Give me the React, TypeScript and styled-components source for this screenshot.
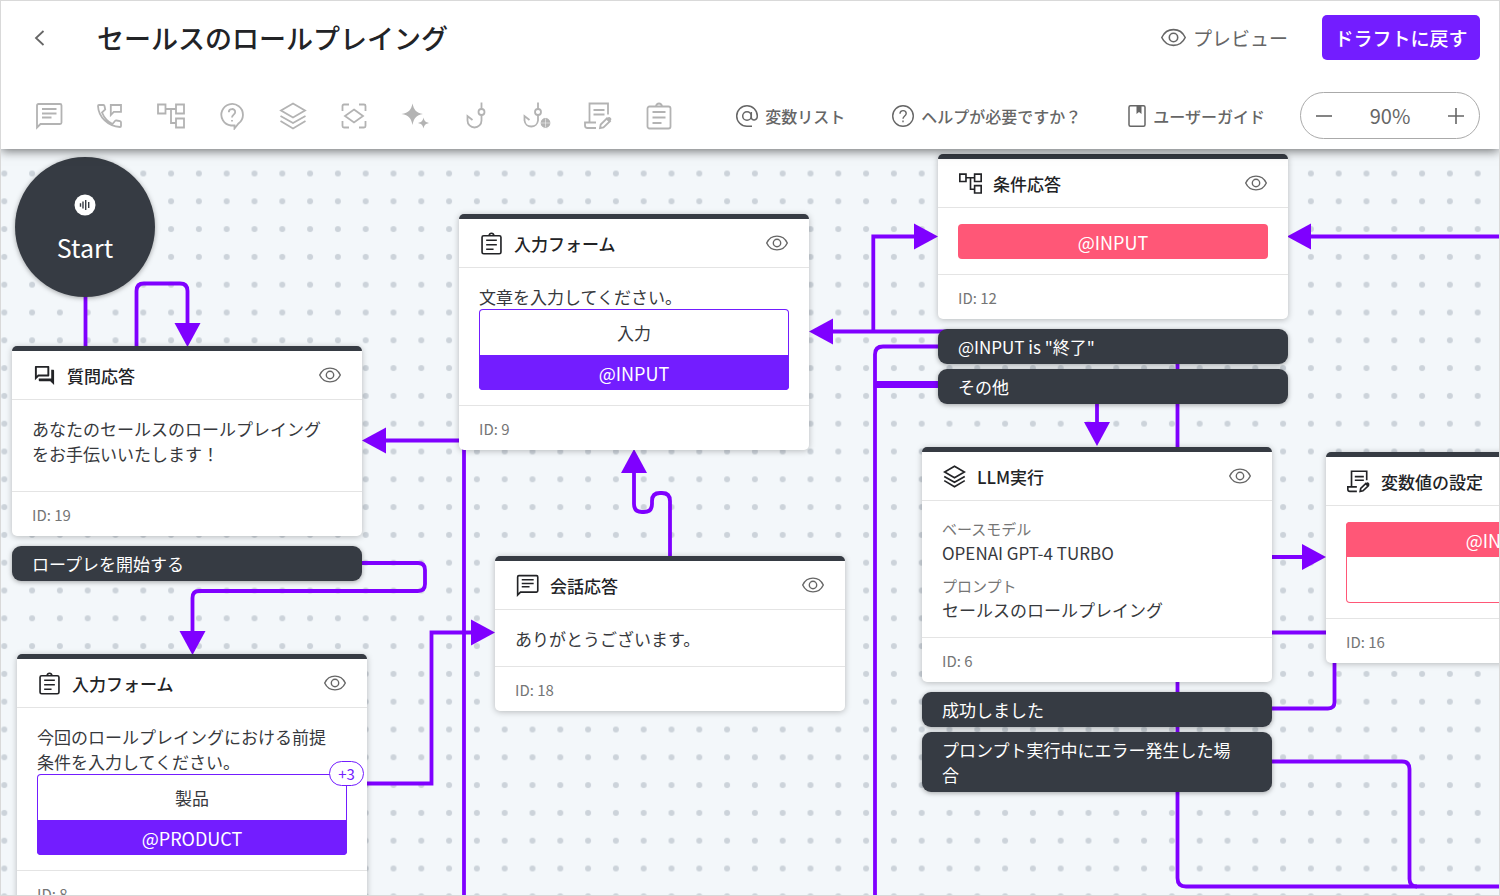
import React from "react";
import styled, { createGlobalStyle, css } from "styled-components";
import { MdOutlineForum } from "react-icons/md";

const color = {
  ink: "#222326",
  text: "#37393d",
  grey: "#666666",
  muted: "#757575",
  tool: "#b3b3b3",
  dark: "#363b43",
  purple: "#731dff",
  wire: "#7f00ff",
  pink: "#ff5777",
  line: "#e4e4e4",
  canvas: "#f3f7fa",
  dot: "#ccd3da",
};

const GlobalStyle = createGlobalStyle`
  *, *::before, *::after { box-sizing: border-box; }
  body {
    margin: 0;
    font-family: "Noto Sans CJK JP", "Noto Sans", sans-serif;
    color: ${color.text};
  }
  button {
    font: inherit;
    color: inherit;
    background: none;
    border: 0;
    padding: 0;
    cursor: pointer;
  }
  p, h1, h2, dl, dd { margin: 0; }
  svg { display: block; flex: none; }
`;

/* ---------- icons ---------- */

type IconName =
  | "chat" | "phone" | "tree" | "ask" | "layers" | "scan" | "sparkle"
  | "hook" | "hookGlobe" | "script" | "clipboard";

const glyphs: Record<IconName, React.ReactNode> = {
  chat: (
    <>
      <path d="M2 25.5V3.5Q2 2 3.5 2H25Q26.5 2 26.5 3.5V20.5Q26.5 22 25 22H5.5Z" />
      <path d="M7 7H21.5M7 11.5H21.5M7 15.5H16.500" />
    </>
  ),
  phone: (
    <>
      <path d="M2 4Q2 3 3 3H7.500Q8.300 3 8.500 4L9.200 7.500L6 10.500C8 15.500 11.500 19.500 16.500 22L19 19Q19.600 18.300 20.500 18.500L24 19.200Q25 19.500 25 20.500V24Q25 25 24 25C12 24.500 2.500 15 2 4Z" />
      <path d="M14.800 13V3H25V9.800H17.800Z" />
    </>
  ),
  tree: (
    <>
      <path d="M1 2.500H8.500V11.500H1ZM19 2.500H27V11.500H19ZM19 16.500H27V25.500H19Z" />
      <path d="M8.500 7H19M14 7V21H19" />
    </>
  ),
  ask: (
    <>
      <path d="M16.500 26.500L20.500 21.500A10.800 10.800 0 1 0 13 23.500H16.500V26.500Z" />
      <path d="M10.800 10.200C10.800 6 17.200 6 17.200 10C17.200 12.500 14 12.800 14 15.500M14 18V19.600" />
    </>
  ),
  layers: (
    <>
      <path d="M14 1.500L26 8.500L14 15.500L2 8.500Z" />
      <path d="M1.500 14L14 21L26.500 14M1.500 19L14 26.500L26.500 19" />
    </>
  ),
  scan: (
    <>
      <path d="M9 2.500H4Q2.500 2.500 2.500 4V9M19 2.500H24Q25.500 2.500 25.500 4V9M2.500 19V24Q2.500 25.500 4 25.500H9M25.500 19V24Q25.500 25.500 24 25.500H19" />
      <path d="M14 7.500L23 14L14 20.500L5 14Z" />
    </>
  ),
  sparkle: (
    <path
      fill="currentColor"
      stroke="none"
      d="M11.500 1.500C13 8 15 10.500 22 12C15 13.500 13 16 11.500 23C10 16 8 13.500 0.500 12C8 10.500 10 8 11.500 1.500ZM22.500 15.500C23.400 19 24.200 20 28 21C24.200 22 23.400 23 22.500 26.500C21.600 23 20.800 22 17 21C20.800 20 21.600 19 22.500 15.500Z"
    />
  ),
  hook: (
    <>
      <path d="M19.500 0.500V7M19.500 13V18.500A7 7 0 0 1 5.500 18.500V14L10.500 18" />
      <circle cx="19.500" cy="10" r="3" />
    </>
  ),
  hookGlobe: (
    <>
      <path d="M15 0.500V7M15 13V18.500A6.800 6.800 0 0 1 1.500 18.500V14L6.500 18" />
      <circle cx="15" cy="10" r="3" />
      <circle cx="22.500" cy="21" r="5.500" fill="currentColor" stroke="#fff" strokeWidth="1.200" />
      <path d="M18 21H27M22.500 16.500V25.500" stroke="#fff" strokeWidth="0.500" />
    </>
  ),
  script: (
    <>
      <path d="M5.500 20.500V1.500H24V12.500M9.500 8H20.500M9.500 12.500H20.500M12 20.500H1V23.500Q1 26 3.500 26H12" />
      <path d="M16 26L16.700 22.500L23 16.300L26 19.200L19.500 25.300Z" />
      <path d="M22 17.200L25 20.200L27 18.200Q28 17 26.800 16Q25.500 14.500 24.200 15.300Z" fill="currentColor" stroke="none" />
    </>
  ),
  clipboard: (
    <>
      <rect x="2.500" y="4.500" width="23" height="22" rx="2" />
      <path d="M7.500 10H20.500M7.500 15.500H20.500M7.500 21H16.500M11 4.500Q11.500 1.500 14 1.500Q16.500 1.500 17 4.500" />
    </>
  ),
};

const Icon = ({ name, size = 28, stroke = 1.8 }: { name: IconName; size?: number; stroke?: number }) => (
  <svg width={size} height={size} viewBox="0 0 28 28" fill="none" stroke="currentColor" strokeWidth={stroke} aria-hidden>
    {glyphs[name]}
  </svg>
);

const Eye = ({ size = 22 }: { size?: number }) => (
  <svg width={size} height={size} viewBox="0 0 22 22" fill="none" stroke="currentColor" strokeWidth="1.4" aria-hidden>
    <path d="M0.700 11C5 1.800 17 1.800 21.300 11C17 20.200 5 20.200 0.700 11Z" />
    <circle cx="11" cy="11" r="3.700" />
  </svg>
);

const Chevron = () => (
  <svg width="12" height="18" viewBox="0 0 12 18" fill="none" stroke="currentColor" strokeWidth="1.8" aria-hidden>
    <path d="M9.500 2L2 9L9.500 16" />
  </svg>
);

const At = () => (
  <svg width="24" height="24" viewBox="0 0 24 24" fill="none" stroke="currentColor" strokeWidth="1.5" aria-hidden>
    <circle cx="12" cy="12" r="4.300" />
    <path d="M16.300 8V13.200C16.300 17 22.300 17 22.300 12A10.300 10.300 0 1 0 12 22.300H17" />
  </svg>
);

const Help = () => (
  <svg width="24" height="24" viewBox="0 0 24 24" fill="none" stroke="currentColor" strokeWidth="1.400" aria-hidden>
    <circle cx="12" cy="12" r="10.300" />
    <path d="M9 9.700C9 5.500 15.200 5.800 15.200 9.500C15.200 12 12 12 12 14.800M12 16.500V18.200" />
  </svg>
);

const Guide = () => (
  <svg width="20" height="24" viewBox="0 0 20 24" fill="none" stroke="currentColor" strokeWidth="1.500" aria-hidden>
    <rect x="2" y="1.700" width="16" height="20.600" rx="1.500" />
    <path d="M9.500 2H14.500V10L12 8L9.500 10Z" fill="currentColor" stroke="none" />
  </svg>
);

const Sign = ({ plus }: { plus?: boolean }) => (
  <svg width="18" height="18" viewBox="0 0 18 18" stroke="currentColor" strokeWidth="1.600" aria-hidden>
    <path d={plus ? "M1 9H17M9 1V17" : "M1 9H17"} />
  </svg>
);

const Voice = () => (
  <svg width="22" height="22" viewBox="0 0 22 22" aria-hidden>
    <circle cx="11" cy="11" r="10.500" fill="#fff" />
    <path d="M6.500 9.200V12.800M9 7.500V14.500M11.700 6V16M14.700 8V14" stroke={color.dark} strokeWidth="1.400" />
  </svg>
);

/* ---------- page frame and header ---------- */

const Page = styled.div`
  display: flex;
  flex-direction: column;
  height: 100vh;
  border: 1px solid #d9d9d9;
  overflow: hidden;
`;

const Header = styled.header`
  position: relative;
  z-index: 2;
  flex: none;
  background: #fff;
  box-shadow: 0 2px 10px rgba(0, 0, 0, 0.55);
`;

const TitleRow = styled.div`
  display: flex;
  align-items: center;
  height: 73px;
  padding: 0 19px 0 33px;
`;

const BackButton = styled.button`
  display: flex;
  color: ${color.grey};
`;

const Title = styled.h1`
  flex: 1;
  margin-left: 51px;
  font-size: 27px;
  line-height: 40px;
  font-weight: 500;
  color: ${color.ink};
  white-space: nowrap;
`;

const PreviewButton = styled.button`
  display: flex;
  align-items: center;
  gap: 7px;
  margin-right: 34px;
  font-size: 19px;
  line-height: 28px;
  color: ${color.grey};
  white-space: nowrap;
`;

const DraftButton = styled.button`
  width: 158px;
  height: 45px;
  border-radius: 5px;
  background: ${color.purple};
  color: #fff;
  font-size: 19px;
  font-weight: 500;
  white-space: nowrap;
`;

const ToolRow = styled.div`
  display: flex;
  align-items: center;
  height: 75px;
  padding: 8px 19px 0 34px;
`;

const Tools = styled.div`
  display: flex;
  flex: 1;
  gap: 33px;
  color: ${color.tool};
`;

const ToolButton = styled.button`
  display: flex;
`;

const Links = styled.nav`
  display: flex;
  gap: 46px;
  margin-right: 35px;
`;

const HeaderLink = styled.a`
  display: flex;
  align-items: center;
  gap: 6px;
  font-size: 16px;
  line-height: 24px;
  font-weight: 500;
  color: ${color.grey};
  text-decoration: none;
  white-space: nowrap;
`;

const Zoom = styled.div`
  display: flex;
  align-items: center;
  justify-content: space-between;
  width: 180px;
  height: 47px;
  padding: 0 14px;
  border: 1px solid #aaaaaa;
  border-radius: 24px;
  color: ${color.grey};
  font-size: 20px;
`;

const ZoomButton = styled.button`
  display: flex;
`;

/* ---------- canvas ---------- */

const Canvas = styled.main`
  position: relative;
  flex: 1;
  overflow: hidden;
  background: ${color.canvas};
`;

const Wires = styled.svg`
  position: absolute;
  top: 0;
  left: 0;
  width: 100%;
  height: 100%;
`;

const Placed = styled.div<{ $x: number; $y: number }>`
  position: absolute;
  left: ${(p) => p.$x}px;
  top: ${(p) => p.$y}px;
`;

const StartNode = styled.div`
  display: flex;
  flex-direction: column;
  align-items: center;
  gap: 14px;
  width: 140px;
  height: 140px;
  padding-top: 37px;
  border-radius: 50%;
  background: ${color.dark};
  color: #fff;
  font-size: 25px;
  line-height: 34px;
  box-shadow: 0 1px 5px rgba(0, 0, 0, 0.35);
`;

const NodeStack = styled.div`
  display: flex;
  flex-direction: column;
  gap: 5px;
  width: 350px;
`;

const Card = styled.article`
  margin-bottom: 5px;
  border-top: 5px solid ${color.dark};
  border-radius: 5px;
  background: #fff;
  box-shadow: 0 1px 6px rgba(0, 0, 0, 0.25);
`;

const CardHeader = styled.header`
  display: flex;
  align-items: center;
  gap: 11px;
  height: 49px;
  padding: 0 21px;
  border-bottom: 1px solid ${color.line};
  color: ${color.ink};
`;

const CardTitle = styled.h2`
  flex: 1;
  font-size: 17px;
  line-height: 25px;
  font-weight: 500;
`;

const EyeButton = styled.button`
  display: flex;
  color: ${color.grey};
`;

const CardBody = styled.div`
  padding: 16px 20px 15px;
  font-size: 17px;
  line-height: 25px;
`;

const Message = styled.p<{ $spaced?: boolean }>`
  padding-right: 12px;
  margin-bottom: ${(p) => (p.$spaced ? 10 : 0)}px;
`;

const Facts = styled.dl`
  dt {
    font-size: 15px;
    line-height: 23px;
    color: ${color.muted};
  }
  dd + dt { margin-top: 9px; }
`;

const CardFooter = styled.footer`
  height: 45px;
  padding: 0 20px;
  border-top: 1px solid ${color.line};
  font-size: 15px;
  line-height: 46px;
  color: ${color.muted};
`;

const Field = styled.div<{ $tone: string }>`
  position: relative;
  display: flex;
  flex-direction: column;
  border-radius: 4px;
  text-align: center;
  box-shadow: inset 0 0 0 1px ${(p) => p.$tone};
`;

const FieldValue = styled.div`
  height: 46px;
  line-height: 48px;
`;

const Variable = styled.div<{ $tone: string; $at: "top" | "bottom" | "alone" }>`
  height: 35px;
  line-height: 36px;
  text-align: center;
  font-size: 18px;
  background: ${(p) => p.$tone};
  color: #fff;
  ${(p) => css`
    border-radius: ${p.$at === "alone" ? "4px" : p.$at === "top" ? "4px 4px 0 0" : "0 0 4px 4px"};
  `}
`;

const Badge = styled.span`
  position: absolute;
  top: -13px;
  right: -17px;
  width: 35px;
  height: 25px;
  border: 1px solid ${color.purple};
  border-radius: 13px;
  background: #fff;
  color: ${color.purple};
  font-size: 15px;
  line-height: 23px;
`;

const Branch = styled.div`
  padding: 5px 32px 5px 20px;
  border-radius: 9px;
  background: ${color.dark};
  color: #fff;
  font-size: 17px;
  line-height: 25px;
  box-shadow: 0 1px 5px rgba(0, 0, 0, 0.35);
`;

type NodeProps = {
  x: number;
  y: number;
  id: number;
  title: string;
  icon: React.ReactNode;
  branches?: string[];
  children: React.ReactNode;
};

const FlowNode = ({ x, y, id, title, icon, branches = [], children }: NodeProps) => (
  <Placed $x={x} $y={y}>
    <NodeStack>
      <Card>
        <CardHeader>
          {icon}
          <CardTitle>{title}</CardTitle>
          <EyeButton aria-label="プレビュー"><Eye /></EyeButton>
        </CardHeader>
        <CardBody>{children}</CardBody>
        <CardFooter>ID: {id}</CardFooter>
      </Card>
      {branches.map((b) => <Branch key={b}>{b}</Branch>)}
    </NodeStack>
  </Placed>
);

const wires = [
  "M84.500 146V200",
  "M135.500 200V142Q135.500 134.500 143 134.500H179Q186.500 134.500 186.500 142V176",
  "M460 291.500H384",
  "M463 290V760",
  "M360 414H417Q424 414 424 421V435Q424 442 417 442H198Q191.500 442 191.500 449V484",
  "M364 634.500H430.500V483.500H472",
  "M669 410V352Q669 344 661 344H659Q651 344 651 352V355Q651 363 643 363H641Q633 363 633 355V322",
  "M872.300 182V87.500H915",
  "M830 182.500H1168Q1176.500 182.500 1176.500 191V729Q1176.500 737.500 1185 737.500H2600",
  "M940 197.500H882Q874 197.500 874 205.500V760",
  "M1096 250V276",
  "M2600 87.500H1308",
  "M1268 408H1303",
  "M1268 483.500H1330",
  "M1268 559.500H1327Q1333.500 559.500 1333.500 553V500",
  "M1268 612.500H1401Q1408.500 612.500 1408.500 620V730Q1408.500 737.500 1416 737.500",
];

const arrows: [number, number, number][] = [
  [186.5, 198, 90],
  [361, 291.5, 180],
  [191.5, 506, 90],
  [494, 483.5, 0],
  [633, 300, 270],
  [937, 87.5, 0],
  [808, 182.5, 180],
  [1096, 297, 90],
  [1286, 87.5, 180],
  [1325, 408, 0],
];

const tools: [IconName, string][] = [
  ["chat", "会話応答"], ["phone", "音声応答"], ["tree", "条件応答"], ["ask", "質問応答"],
  ["layers", "LLM実行"], ["scan", "スキャン"], ["sparkle", "生成"], ["hook", "フック"],
  ["hookGlobe", "外部フック"], ["script", "変数値の設定"], ["clipboard", "入力フォーム"],
];

const nodeIcon = (name: IconName) => <Icon name={name} size={23} stroke={2} />;

export default function App() {
  return (
    <>
      <GlobalStyle />
      <Page>
        <Header>
          <TitleRow>
            <BackButton aria-label="戻る"><Chevron /></BackButton>
            <Title>セールスのロールプレイング</Title>
            <PreviewButton><Eye size={25} />プレビュー</PreviewButton>
            <DraftButton>ドラフトに戻す</DraftButton>
          </TitleRow>
          <ToolRow>
            <Tools>
              {tools.map(([name, label]) => (
                <ToolButton key={name} aria-label={label}><Icon name={name} /></ToolButton>
              ))}
            </Tools>
            <Links>
              <HeaderLink href="#variables"><At />変数リスト</HeaderLink>
              <HeaderLink href="#help"><Help />ヘルプが必要ですか？</HeaderLink>
              <HeaderLink href="#guide"><Guide />ユーザーガイド</HeaderLink>
            </Links>
            <Zoom>
              <ZoomButton aria-label="縮小"><Sign /></ZoomButton>
              <span>90%</span>
              <ZoomButton aria-label="拡大"><Sign plus /></ZoomButton>
            </Zoom>
          </ToolRow>
        </Header>

        <Canvas>
          <Wires aria-hidden>
            <defs>
              <pattern id="dots" x="-10.600" y="10.600" width="27.800" height="27.800" patternUnits="userSpaceOnUse">
                <circle cx="13.900" cy="13.900" r="3" fill={color.dot} />
              </pattern>
            </defs>
            <rect width="100%" height="100%" fill="url(#dots)" />
            <g fill="none" stroke={color.wire} strokeWidth="3.800">
              {wires.map((d) => <path key={d} d={d} />)}
              <path d="M940 235.500H874" strokeWidth="7" />
            </g>
            <g fill={color.wire}>
              {arrows.map(([x, y, turn]) => (
                <path key={`${x}-${y}`} d="M0 0L-24 -13V13Z" transform={`translate(${x} ${y}) rotate(${turn})`} />
              ))}
            </g>
          </Wires>

          <Placed $x={14} $y={8}>
            <StartNode><Voice />Start</StartNode>
          </Placed>

          <FlowNode x={11} y={197} id={19} title="質問応答" icon={<MdOutlineForum size={23} />} branches={["ロープレを開始する"]}>
            <Message $spaced>あなたのセールスのロールプレイングをお手伝いいたします！</Message>
          </FlowNode>

          <FlowNode x={16} y={505} id={8} title="入力フォーム" icon={nodeIcon("clipboard")}>
            <Message>今回のロールプレイングにおける前提条件を入力してください。</Message>
            <Field $tone={color.purple}>
              <FieldValue>製品</FieldValue>
              <Variable $tone={color.purple} $at="bottom">@PRODUCT</Variable>
              <Badge>+3</Badge>
            </Field>
          </FlowNode>

          <FlowNode x={458} y={65} id={9} title="入力フォーム" icon={nodeIcon("clipboard")}>
            <Message>文章を入力してください。</Message>
            <Field $tone={color.purple}>
              <FieldValue>入力</FieldValue>
              <Variable $tone={color.purple} $at="bottom">@INPUT</Variable>
            </Field>
          </FlowNode>

          <FlowNode x={494} y={407} id={18} title="会話応答" icon={nodeIcon("chat")}>
            <Message>ありがとうございます。</Message>
          </FlowNode>

          <FlowNode x={937} y={5} id={12} title="条件応答" icon={nodeIcon("tree")} branches={['@INPUT is "終了"', "その他"]}>
            <Variable $tone={color.pink} $at="alone">@INPUT</Variable>
          </FlowNode>

          <FlowNode x={921} y={298} id={6} title="LLM実行" icon={nodeIcon("layers")} branches={["成功しました", "プロンプト実行中にエラー発生した場合"]}>
            <Facts>
              <dt>ベースモデル</dt>
              <dd>OPENAI GPT-4 TURBO</dd>
              <dt>プロンプト</dt>
              <dd>セールスのロールプレイング</dd>
            </Facts>
          </FlowNode>

          <FlowNode x={1325} y={303} id={16} title="変数値の設定" icon={nodeIcon("script")}>
            <Field $tone={color.pink}>
              <Variable $tone={color.pink} $at="top">@INPUT</Variable>
              <FieldValue />
            </Field>
          </FlowNode>
        </Canvas>
      </Page>
    </>
  );
}
